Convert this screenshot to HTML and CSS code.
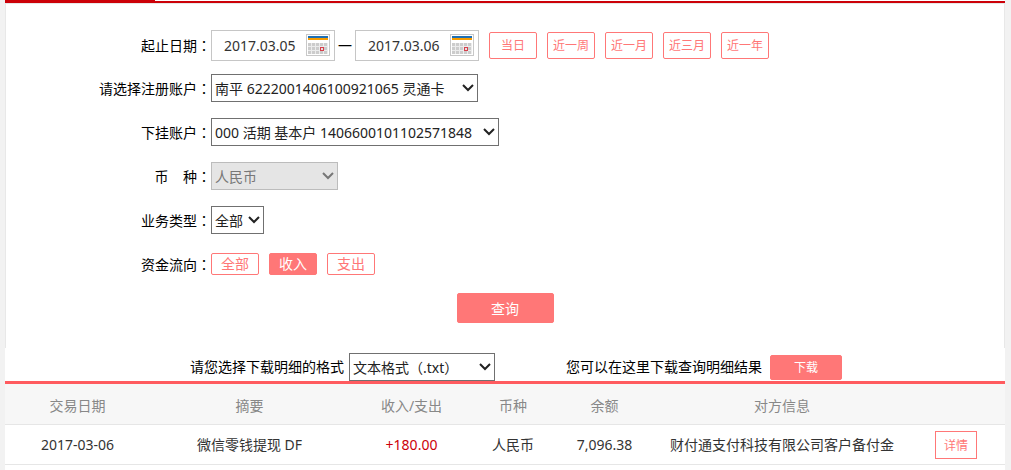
FILE: index.html
```html
<!DOCTYPE html>
<html lang="zh-CN">
<head>
    <meta charset="UTF-8">
    <meta name="viewport" content="width=device-width, initial-scale=1.0">
    <title>账户明细查询</title>
    <link rel="stylesheet" href="styles.css">
</head>
<body>
    <div class="page">
        <div class="tab-line"><div class="tab-active"></div></div>

        <!-- 查询条件 -->
        <form class="panel">
            <div class="row row-date">
                <label class="label" for="date-from">起止日期<span class="colon" lang="zh-TW">：</span></label>
                <div class="date-box">
                    <input type="text" id="date-from" value="2017.03.05">
                    <button type="button" class="cal-btn" aria-label="选择开始日期">
                        <svg width="24" height="22" viewBox="0 0 24 22">
                            <rect x="0.5" y="0.5" width="23" height="21" fill="#fff" stroke="#c8c8c8"/>
                            <path d="M2 3h20" stroke="#1c6fb5" stroke-width="2"/>
                            <path d="M2 5h20" stroke="#f59b00" stroke-width="2"/>
                            <path d="M2 9h20v11h-20z" fill="#ececec"/>
                            <path d="M2 10.500h20M2 14.500h20M2 18.500h20" stroke="#ccc" stroke-width="3" stroke-dasharray="3 1"/>
                            <rect x="14.500" y="13.500" width="3" height="3" fill="#e8dede" stroke="#d5404c"/>
                        </svg>
                    </button>
                </div>
                <span class="dash">—</span>
                <div class="date-box">
                    <input type="text" id="date-to" value="2017.03.06" aria-label="结束日期">
                    <button type="button" class="cal-btn" aria-label="选择结束日期">
                        <svg width="24" height="22" viewBox="0 0 24 22">
                            <rect x="0.5" y="0.5" width="23" height="21" fill="#fff" stroke="#c8c8c8"/>
                            <path d="M2 3h20" stroke="#1c6fb5" stroke-width="2"/>
                            <path d="M2 5h20" stroke="#f59b00" stroke-width="2"/>
                            <path d="M2 9h20v11h-20z" fill="#ececec"/>
                            <path d="M2 10.500h20M2 14.500h20M2 18.500h20" stroke="#ccc" stroke-width="3" stroke-dasharray="3 1"/>
                            <rect x="14.500" y="13.500" width="3" height="3" fill="#e8dede" stroke="#d5404c"/>
                        </svg>
                    </button>
                </div>
                <div class="btn-group range-group">
                    <button type="button" class="btn btn-range">当日</button>
                    <button type="button" class="btn btn-range">近一周</button>
                    <button type="button" class="btn btn-range">近一月</button>
                    <button type="button" class="btn btn-range">近三月</button>
                    <button type="button" class="btn btn-range">近一年</button>
                </div>
            </div>

            <div class="row">
                <label class="label" for="account">请选择注册账户<span class="colon" lang="zh-TW">：</span></label>
                <select id="account" class="w-account">
                    <option>南平 6222001406100921065 灵通卡</option>
                </select>
            </div>

            <div class="row">
                <label class="label" for="sub-account">下挂账户<span class="colon" lang="zh-TW">：</span></label>
                <select id="sub-account" class="w-sub">
                    <option>000 活期 基本户 1406600101102571848</option>
                </select>
            </div>

            <div class="row">
                <label class="label" for="currency">币&nbsp;&nbsp;&nbsp; 种<span class="colon" lang="zh-TW">：</span></label>
                <select id="currency" class="w-currency" disabled>
                    <option>人民币</option>
                </select>
            </div>

            <div class="row">
                <label class="label" for="biz-type">业务类型<span class="colon" lang="zh-TW">：</span></label>
                <select id="biz-type" class="w-type">
                    <option>全部</option>
                </select>
            </div>

            <div class="row">
                <span class="label">资金流向<span class="colon" lang="zh-TW">：</span></span>
                <div class="btn-group">
                    <button type="button" class="btn btn-flow">全部</button>
                    <button type="button" class="btn btn-flow active">收入</button>
                    <button type="button" class="btn btn-flow">支出</button>
                </div>
            </div>

            <button type="button" class="btn active btn-query">查询</button>
        </form>

        <!-- 下载 -->
        <div class="download">
            <label for="format">请您选择下载明细的格式</label>
            <select id="format" class="w-format" lang="zh-TW">
                <option>文本格式（.txt）</option>
            </select>
            <span class="download-tip">您可以在这里下载查询明细结果</span>
            <button type="button" class="btn active btn-download">下载</button>
        </div>

        <!-- 明细 -->
        <table class="detail">
            <colgroup>
                <col class="c-date">
                <col class="c-memo">
                <col class="c-amount">
                <col class="c-cur">
                <col class="c-balance">
                <col class="c-party">
                <col class="c-op">
            </colgroup>
            <thead>
                <tr>
                    <th>交易日期</th>
                    <th>摘要</th>
                    <th>收入/支出</th>
                    <th>币种</th>
                    <th>余额</th>
                    <th>对方信息</th>
                    <th></th>
                </tr>
            </thead>
            <tbody>
                <tr>
                    <td>2017-03-06</td>
                    <td>微信零钱提现 DF</td>
                    <td class="income">+180.00</td>
                    <td>人民币</td>
                    <td>7,096.38</td>
                    <td>财付通支付科技有限公司客户备付金</td>
                    <td><button type="button" class="btn btn-detail">详情</button></td>
                </tr>
            </tbody>
        </table>
    </div>
</body>
</html>
```
FILE: styles.css
```css
* {
    box-sizing: border-box;
    margin: 0;
    padding: 0;
}
body {
    background: #f2f2f2;
    color: #000;
    font-family: "Noto Sans", "Noto Sans CJK SC", sans-serif;
    font-size: 14px;
    line-height: 20px;
}
button, input, select {
    font-family: inherit;
    font-size: 14px;
}
.page {
    min-height: 100vh;
    margin: 0 6px 0 5px;
    background: #fff;
}
.tab-line {
    border-bottom: 2px solid #cc0008;
}
.tab-active {
    width: 150px;
    height: 1px;
    background: #cc0008;
}

/* query form */
.panel {
    padding: 20px 0 25px;
    border: 1px solid #e8e8e8;
    border-bottom: none;
}
.row {
    display: flex;
    align-items: center;
    height: 44px;
}
.row-date {
    height: 42px;
}
.label {
    width: 205px;
    text-align: right;
}
.colon {
    font-family: "Noto Sans CJK TC", sans-serif;
}
.date-box {
    display: flex;
    align-items: center;
    width: 124px;
    height: 31px;
    padding: 0 4px 0 12px;
    border: 1px solid #c6c6c6;
}
.date-box input {
    flex: 1;
    min-width: 0;
    border: none;
    outline: none;
    background: none;
    color: #333;
}
.cal-btn {
    width: 24px;
    height: 22px;
    border: none;
    background: none;
    cursor: pointer;
}
.cal-btn svg {
    display: block;
}
.dash {
    width: 20px;
    text-align: center;
}
.btn-group {
    display: flex;
    gap: 10px;
}
.range-group {
    margin-left: 10px;
}

select {
    appearance: none;
    height: 28px;
    padding: 0 18px 0 3px;
    border: 1px solid #707070;
    border-radius: 0;
    color: #222;
    background: #fff url("data:image/svg+xml,%3Csvg xmlns='http://www.w3.org/2000/svg' width='12' height='8'%3E%3Cpath d='M1 1l5 5 5-5' fill='none' stroke='%23222' stroke-width='2'/%3E%3C/svg%3E") no-repeat right 3px top 9px;
}
select:disabled {
    border-color: #bcbcbc;
    color: #777;
    opacity: 1;
    background: #e5e5e5 url("data:image/svg+xml,%3Csvg xmlns='http://www.w3.org/2000/svg' width='12' height='8'%3E%3Cpath d='M1 1l5 5 5-5' fill='none' stroke='%23777' stroke-width='2'/%3E%3C/svg%3E") no-repeat right 3px top 9px;
}
.w-account {
    width: 267px;
}
.w-sub {
    width: 288px;
}
.w-currency {
    width: 127px;
}
.w-type {
    width: 53px;
}
.w-format {
    width: 146px;
    font-family: "Noto Sans", "Noto Sans CJK TC", sans-serif;
}

.btn {
    border: 1px solid #ff7777;
    border-radius: 2px;
    background: #fff;
    color: #ff7777;
    cursor: pointer;
}
.btn.active {
    background: #ff7777;
    color: #fff;
}
.btn-range {
    width: 48px;
    height: 27px;
    font-size: 12px;
}
.btn-flow {
    width: 48px;
    height: 22px;
    line-height: 20px;
}
.btn-query {
    display: block;
    width: 97px;
    height: 30px;
    margin: 7px auto 0;
}
.btn-download {
    width: 72px;
    height: 25px;
    margin-left: 8px;
    font-size: 12px;
}
.btn-detail {
    width: 42px;
    height: 28px;
    border-radius: 0;
    font-size: 12px;
}

/* download bar */
.download {
    display: flex;
    align-items: center;
    padding: 5px 0 0 185px;
}
.download label {
    margin-right: 5px;
}
.download-tip {
    margin-left: 71px;
}

/* result list */
.detail {
    width: 100%;
    table-layout: fixed;
    border-collapse: separate;
    border-spacing: 0;
    border-top: 3px solid #ff5b5f;
    text-align: center;
    color: #333;
}
.detail th {
    height: 41px;
    padding-top: 3px;
    border-bottom: 1px solid #e6e6e6;
    background: #f7f7f7;
    color: #888;
    font-weight: normal;
}
.detail td {
    height: 40px;
    border-bottom: 1px solid #e6e6e6;
    white-space: nowrap;
}
.detail .income {
    color: #cc0008;
}
.c-date {
    width: 145px;
}
.c-memo {
    width: 199px;
}
.c-amount {
    width: 125px;
}
.c-cur {
    width: 78px;
}
.c-balance {
    width: 105px;
}
.c-party {
    width: 250px;
}
.c-op {
    width: 98px;
}
```
